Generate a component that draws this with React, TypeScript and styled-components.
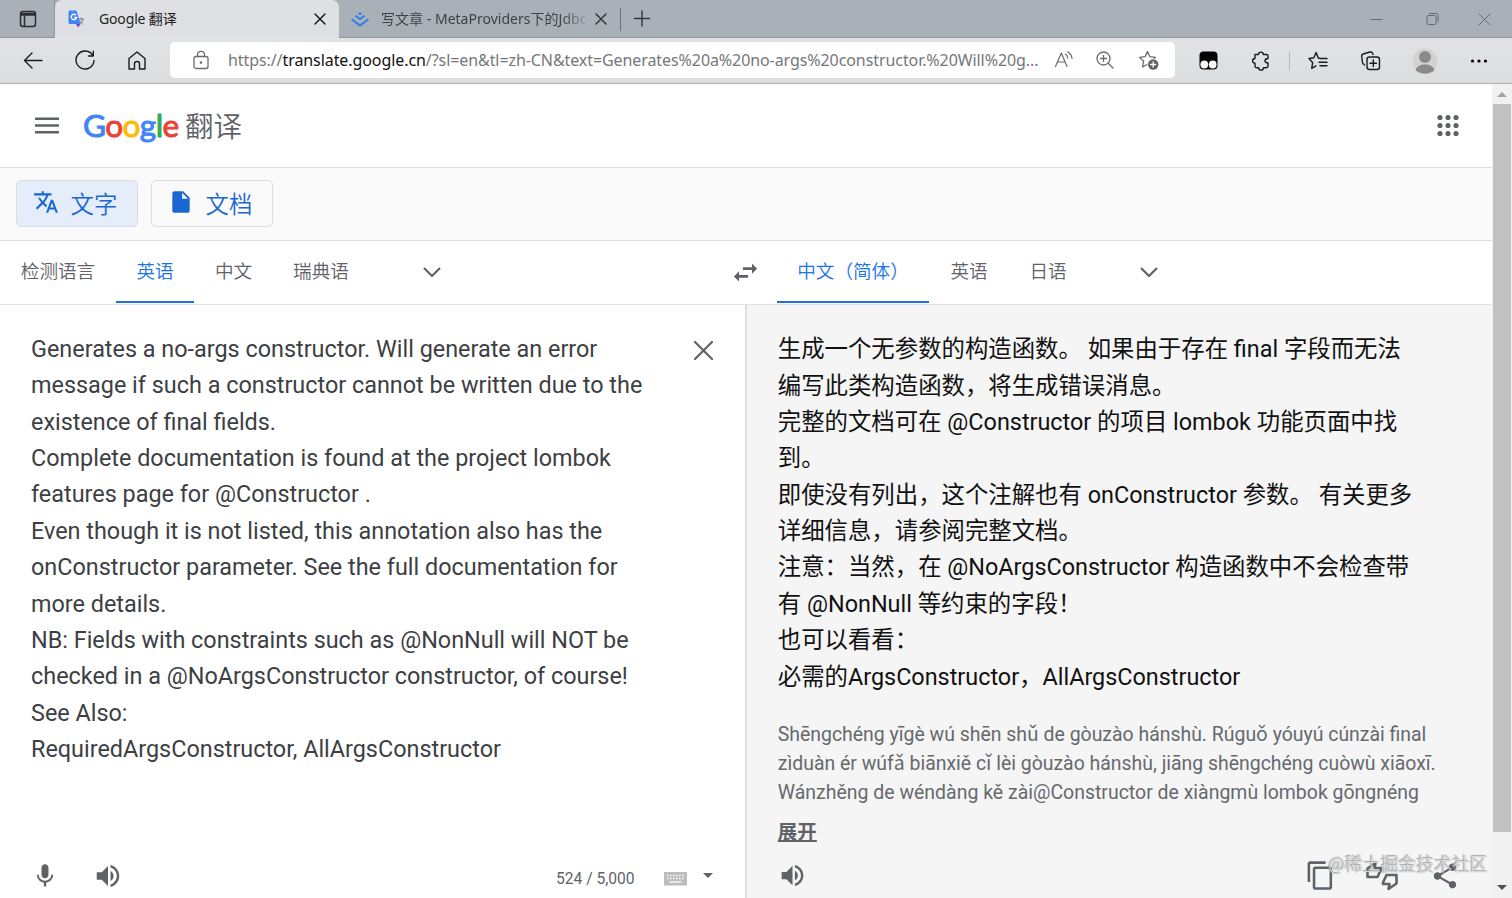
import React from "react";
import styled, { createGlobalStyle } from "styled-components";

const GlobalStyle = createGlobalStyle`
  * { box-sizing: border-box; }
  body { margin: 0; background: #fff; overflow: hidden; }
`;

const uiFont = `"Noto Sans", "Noto Sans CJK SC", sans-serif`;
const pageFont = `Roboto, "Noto Sans CJK SC", sans-serif`;

const Window = styled.div`
  width: 1512px;
  height: 898px;
  display: flex;
  flex-direction: column;
  overflow: hidden;
  font-family: ${pageFont};
  color: #5f6368;
`;

const TabStrip = styled.div`
  height: 38px;
  flex: none;
  display: flex;
  background: #aab0b8;
  box-shadow: inset 0 -1px 0 #92979e;
`;

const TabActions = styled.div`
  width: 55px;
  display: flex;
  align-items: center;
  justify-content: center;
  padding-left: 2px;
  border-right: 1px solid #92979e;
  border-bottom-right-radius: 5px;
`;

const Tab = styled.div<{ $active?: boolean; $width: number }>`
  width: ${(p) => p.$width}px;
  display: flex;
  align-items: center;
  padding: 0 13px 0 ${(p) => (p.$active ? 13 : 12)}px;
  background: ${(p) => (p.$active ? "#dfe0e4" : "transparent")};
  border-radius: ${(p) => (p.$active ? "7px 7px 0 0" : "0")};
  color: ${(p) => (p.$active ? "#1d1f22" : "#3e4247")};
`;

const TabTitle = styled.span<{ $width: number; $fade?: boolean }>`
  width: ${(p) => p.$width}px;
  margin-left: ${(p) => (p.$fade ? 12 : 13)}px;
  font: 400 14px/20px ${uiFont};
  letter-spacing: ${(p) => (p.$fade ? 0.02 : -0.15)}px;
  white-space: nowrap;
  overflow: hidden;
  ${(p) => p.$fade && "mask-image: linear-gradient(90deg, #000 88%, transparent 103%);"}
`;

const NewTab = styled.div`
  width: 44px;
  display: flex;
  align-items: center;
  gap: 12px;
`;

const TabDivider = styled.i`
  width: 1px;
  height: 23px;
  background: #6f747a;
`;

const WindowControls = styled.div`
  margin-left: auto;
  display: flex;
  align-items: center;
  gap: 38px;
  padding-right: 21px;
`;

const Toolbar = styled.div`
  height: 46px;
  flex: none;
  display: flex;
  align-items: center;
  background: linear-gradient(#e2e3e7, #dcdddf);
  border-bottom: 1px solid #b0b1b3;
`;

const ToolCell = styled.div<{ $width: number }>`
  width: ${(p) => p.$width}px;
  display: flex;
  justify-content: center;
  align-items: center;
`;

const NavButtons = styled.div`
  display: flex;
  width: 170px;
  padding-left: 7px;
`;

const AddressBar = styled.div`
  width: 1005px;
  height: 36px;
  margin-top: -1px;
  display: flex;
  align-items: center;
  background: #fff;
  border-radius: 5px;
`;

const Url = styled.span`
  width: 815px;
  margin-left: -3px;
  font: 16px/24px ${uiFont};
  letter-spacing: -0.08px;
  color: #76777a;
  white-space: nowrap;
  b { font-weight: 400; color: #111; }
`;

const Viewport = styled.div`
  flex: 1;
  display: flex;
  min-height: 0;
`;

const Page = styled.main`
  width: 1492px;
  display: flex;
  flex-direction: column;
`;

const Header = styled.header`
  height: 84px;
  display: flex;
  align-items: center;
  padding: 0 32px 0 35px;
  border-bottom: 1px solid #dcdde0;
`;

const Logo = styled.div`
  display: flex;
  align-items: baseline;
  margin: -2px 0 0 24px;
  line-height: 40px;
  white-space: nowrap;
`;

const Wordmark = styled.span`
  width: 96px;
  font: 400 31.5px/40px Lato, sans-serif;
  letter-spacing: -0.55px;
  -webkit-text-stroke: 1px currentColor;
`;

const Letter = styled.span<{ $color: string }>`
  color: ${(p) => p.$color};
`;

const Product = styled.span`
  margin-left: 6px;
  font: 350 28.5px/40px "Noto Sans CJK SC", sans-serif;
  color: #5f6368;
`;

const Push = styled.div<{ $inset?: number }>`
  margin-left: auto;
  padding-right: ${(p) => p.$inset ?? 0}px;
  display: flex;
`;

const ModeBar = styled.nav`
  height: 73px;
  display: flex;
  gap: 13px;
  padding: 12px 15.500px;
  background: #fafafa;
  border-bottom: 1px solid #dcdde0;
`;

const ModeButton = styled.button<{ $active?: boolean }>`
  width: 122px;
  height: 47px;
  display: flex;
  align-items: center;
  padding: 0 0 0 16px;
  gap: 12px;
  border: 1px solid #dadce0;
  border-radius: 5px;
  background: ${(p) => (p.$active ? "#e5ecfa" : "#fafafa")};
  color: #1967d2;
  font: 350 23.4px/40px ${pageFont};
  svg { margin-bottom: 3px; }
  span { padding-top: 2px; }
`;

const LangBar = styled.div`
  height: 64px;
  display: flex;
  border-bottom: 1px solid #dfe1e4;
`;

const LangTab = styled.div<{ $active?: boolean; $width: number }>`
  width: ${(p) => p.$width}px;
  display: flex;
  justify-content: center;
  padding-top: 17px;
  height: 62px;
  font-size: 18.6px;
  line-height: 28px;
  white-space: nowrap;
  font-weight: 350;
  color: ${(p) => (p.$active ? "#1a73e8" : "#5f6368")};
  border-bottom: 2px solid ${(p) => (p.$active ? "#1f6fd8" : "transparent")};
`;

const LangIcon = styled.div<{ $width: number }>`
  width: ${(p) => p.$width}px;
  display: flex;
  align-items: center;
  justify-content: center;
  padding-bottom: 1px;
`;

const Panels = styled.div`
  flex: 1;
  display: flex;
  min-height: 0;
`;

const SourcePanel = styled.section`
  width: 747px;
  border-right: 2px solid #dfe0e2;
  display: flex;
  flex-direction: column;
`;

const SourceBody = styled.div`
  display: flex;
  justify-content: space-between;
  padding: 26px 32px 0 31px;
`;

const Text = styled.div<{ $color: string }>`
  font-size: 23.4px;
  line-height: 36.36px;
  color: ${(p) => p.$color};
`;

const Line = styled.div<{ $track?: number }>`
  white-space: pre;
  letter-spacing: ${(p) => p.$track ?? 0}px;
`;

const ClearButton = styled.div`
  padding-top: 10px;
`;

const ActionRow = styled.div`
  margin-top: auto;
  height: 45px;
  display: flex;
  align-items: center;
`;

const Counter = styled.span`
  margin-left: 430px;
  width: 108px;
  padding-top: 7px;
  font-size: 15.6px;
  line-height: 20px;
`;

const Keyboard = styled.svg`
  margin-top: 6px;
`;

const TargetPanel = styled.section`
  position: relative;
  flex: 1;
  display: flex;
  flex-direction: column;
  padding: 26.300px 0 0 30.800px;
  background: #f5f5f5;
`;

const Pinyin = styled.div`
  margin-top: 26.500px;
  font-size: 19.43px;
  line-height: 28.7px;
  color: #65696d;
`;

const Expand = styled.a`
  margin-top: 11px;
  font: 700 19.5px/28px ${pageFont};
  color: #5f6368;
  text-decoration: underline 2px;
  text-underline-offset: 1px;
`;

const Watermark = styled.div`
  position: absolute;
  right: 4px;
  bottom: 21px;
  font: 300 17.9px/28px "Noto Sans CJK SC", sans-serif;
  color: #e2e2e2;
  text-shadow: 0 0 1px #777, -1px -1px 1px #999;
  white-space: nowrap;
`;

const Scrollbar = styled.aside`
  width: 20px;
  display: flex;
  flex-direction: column;
  align-items: center;
  background: #f1f1f1;
  padding: 8px 0 8px;
`;

const Thumb = styled.div`
  width: 18px;
  height: 728px;
  margin: 7px 0 auto;
  background: #c1c1c1;
`;

type IconProps = { d: string; size?: number; color?: string };
const Icon = ({ d, size = 28, color = "#5f6368" }: IconProps) => (
  <svg width={size} height={size} viewBox="0 0 24 24" fill={color}><path d={d} /></svg>
);

type StrokeProps = { w?: number; h?: number; sw?: number; color?: string; children: React.ReactNode };
const Stroke = ({ w = 24, h = 24, sw = 1.4, color = "#1b1b1d", children }: StrokeProps) => (
  <svg width={w} height={h} viewBox={`0 0 ${w} ${h}`} fill="none" stroke={color} strokeWidth={sw} strokeLinecap="round" strokeLinejoin="round">{children}</svg>
);

const Close = ({ size = 10, color = "#1b1b1d", sw = 1.5 }) => (
  <Stroke w={size + 2} h={size + 2} sw={sw} color={color}>
    <path d={`M1 1L${size + 1} ${size + 1}M${size + 1} 1L1 ${size + 1}`} />
  </Stroke>
);

const paths = {
  translate: "M12.87 15.07l-2.54-2.51.03-.03c1.74-1.94 2.98-4.17 3.71-6.53H17V4h-7V2H8v2H1v1.99h11.17C11.5 7.92 10.44 9.75 9 11.35 8.07 10.32 7.3 9.19 6.69 8h-2c.73 1.63 1.73 3.17 2.98 4.56l-5.09 5.02L4 19l5-5 3.11 3.11.76-2.04zM18.5 10h-2L12 22h2l1.12-3h4.75L21 22h2l-4.5-12zm-2.62 7l1.62-4.33L19.12 17h-3.24z",
  file: "M6 2c-1.1 0-1.99.9-1.99 2L4 20c0 1.1.89 2 1.99 2H18c1.1 0 2-.9 2-2V8l-6-6H6zm7 7V3.5L18.5 9H13z",
  mic: "M12 14c1.66 0 2.99-1.34 2.99-3L15 5c0-1.66-1.34-3-3-3S9 3.34 9 5v6c0 1.66 1.34 3 3 3zm5.3-3c0 3-2.54 5.1-5.3 5.1S6.700 14 6.700 11H5c0 3.410 2.720 6.230 6 6.720V21h2v-3.280c3.280-.480 6-3.300 6-6.720h-1.700z",
  volume: "M3 9v6h4l5 5V4L7 9H3zm13.500 3c0-1.770-1.020-3.290-2.500-4.030v8.050c1.480-.730 2.500-2.250 2.500-4.020zM14 3.230v2.060c2.890.860 5 3.540 5 6.710s-2.110 5.850-5 6.710v2.060c4.010-.910 7-4.490 7-8.770s-2.990-7.860-7-8.770z",
  swap: "M6.990 11L3 15l3.990 4v-3H14v-2H6.990v-3zM21 9l-3.990-4v3H10v2h7.010v3L21 9z",
  copy: "M16 1H4c-1.100 0-2 .9-2 2v14h2V3h12V1zm3 4H8c-1.100 0-2 .9-2 2v14c0 1.100.9 2 2 2h11c1.100 0 2-.9 2-2V7c0-1.100-.9-2-2-2zm0 16H8V7h11v14z",
  share: "M18 16.080c-.760 0-1.440.3-1.960.770L8.910 12.700c.050-.230.090-.460.090-.7s-.040-.470-.090-.7l7.050-4.110c.540.5 1.250.810 2.040.810 1.660 0 3-1.340 3-3s-1.340-3-3-3-3 1.340-3 3c0 .240.040.470.090.7L8.040 9.810C7.500 9.310 6.790 9 6 9c-1.660 0-3 1.340-3 3s1.340 3 3 3c.790 0 1.500-.310 2.040-.810l7.120 4.160c-.050.210-.080.430-.080.650 0 1.610 1.310 2.920 2.920 2.920s2.920-1.310 2.920-2.920-1.310-2.920-2.920-2.920z",
};

const Chevron = () => (
  <svg width="20" height="12" viewBox="0 0 20 12" fill="none" stroke="#5f6368" strokeWidth="2.200"><path d="M2 2l8 8 8-8" /></svg>
);

const TranslateFavicon = () => (
  <svg width="18" height="19" viewBox="0 0 18 19">
    <path d="M10.500 9h5.500M13.200 7.500V9M15 9c-.6 2.600-2 4.200-4 5.200M11.800 10.500c.8 1.900 1.900 3 3.500 3.900" stroke="#777d84" fill="none" />
    <path d="M2 .5h6.500l4 13.500H2q-1.500 0-1.500-1.500V2Q.5.5 2 .5z" fill="#4285f4" />
    <path d="M8 14h4.400l-2.300 3.500z" fill="#7446b5" />
    <path d="M8 5.200A2.700 2.700 0 1 0 8.600 7.500H6.300" stroke="#fff" strokeWidth="1.300" fill="none" />
  </svg>
);

const JuejinFavicon = () => (
  <svg width="18" height="15" viewBox="0 0 18 15" fill="none" stroke="#2d7df0" strokeWidth="1.900">
    <path d="M9 0l2 1.600-2 1.600-2-1.600z" fill="#2d7df0" stroke="none" />
    <path d="M4.600 3.800L9 7.100l4.400-3.300M.6 7.200L9 13.500l8.400-6.300" />
  </svg>
);

const starPath = "M10 2l2.400 5.200 5.600.7-4.100 3.900 1.100 5.700L10 14.700l-5 2.800 1.100-5.700L2 7.900l5.600-.7z";

const source: [string, number?][] = [
  ["Generates a no-args constructor. Will generate an error"],
  ["message if such a constructor cannot be written due to the"],
  ["existence of final fields."],
  ["Complete documentation is found at the project lombok"],
  ["features page for @Constructor ."],
  ["Even though it is not listed, this annotation also has the"],
  ["onConstructor parameter. See the full documentation for"],
  ["more details."],
  ["NB: Fields with constraints such as @NonNull will NOT be"],
  ["checked in a @NoArgsConstructor constructor, of course!"],
  ["See Also:"],
  ["RequiredArgsConstructor, AllArgsConstructor"],
];

const target: [string, number?][] = [
  ["生成一个无参数的构造函数。 如果由于存在 final 字段而无法"],
  ["编写此类构造函数，将生成错误消息。"],
  ["完整的文档可在 @Constructor 的项目 lombok 功能页面中找"],
  ["到。"],
  ["即使没有列出，这个注解也有 onConstructor 参数。 有关更多"],
  ["详细信息，请参阅完整文档。"],
  ["注意：当然，在 @NoArgsConstructor 构造函数中不会检查带"],
  ["有 @NonNull 等约束的字段！"],
  ["也可以看看："],
  ["必需的ArgsConstructor，AllArgsConstructor"],
];

const pinyin: [string, number?][] = [
  ["Shēngchéng yīgè wú shēn shǔ de gòuzào hánshù. Rúguǒ yóuyú cúnzài final"],
  ["zìduàn ér wúfǎ biānxiě cǐ lèi gòuzào hánshù, jiāng shēngchéng cuòwù xiāoxī."],
  ["Wánzhěng de wéndàng kě zài@Constructor de xiàngmù lombok gōngnéng", 0.02],
];

const Lines = ({ items }: { items: [string, number?][] }) => (
  <>{items.map(([text, track]) => <Line key={text} $track={track}>{text}</Line>)}</>
);

const brand: [string, string][] = [["G", "#4285f4"], ["o", "#ea4335"], ["o", "#fbbc05"], ["g", "#4285f4"], ["l", "#34a853"], ["e", "#ea4335"]];

export default function App() {
  return (
    <Window lang="zh-CN">
      <GlobalStyle />
      <TabStrip>
        <TabActions>
          <Stroke w={18} h={18} sw={1.5} color="#2b2e33">
            <rect x="1.500" y="1.500" width="15" height="15" rx="2.500" />
            <path d="M2 3.500h14M2 5h14M5.500 5v11" />
          </Stroke>
        </TabActions>
        <Tab $active $width={284}>
          <TranslateFavicon />
          <TabTitle $width={215}>Google 翻译</TabTitle>
          <Close />
        </Tab>
        <Tab $width={281}>
          <JuejinFavicon />
          <TabTitle $fade $width={204}>写文章 - MetaProviders下的Jdbc</TabTitle>
          <Push><Close color="#33373b" /></Push>
        </Tab>
        <NewTab>
          <TabDivider />
          <Stroke w={18} h={18} sw={1.4} color="#33373b"><path d="M9 1v15M1.500 8.500h15" /></Stroke>
        </NewTab>
        <WindowControls>
          <Stroke w={20} h={14} sw={1} color="#666b71"><path d="M3 7.500h11" /></Stroke>
          <Stroke w={14} h={14} sw={1} color="#666b71">
            <rect x="1" y="3.500" width="9" height="9" rx="1.500" />
            <path d="M3.500 1.500h6.500q2 0 2 2V10" />
          </Stroke>
          <Close size={11} color="#666b71" sw={1} />
        </WindowControls>
      </TabStrip>

      <Toolbar>
        <NavButtons>
          <ToolCell $width={52}><Stroke w={20} h={18}><path d="M19 8.500H1.500M9 1L1.500 8.500 9 16" /></Stroke></ToolCell>
          <ToolCell $width={52}><Stroke w={22} h={22}><path d="M18.700 5.300A9 9 0 1 0 20 10.500M19.300 1.200v4.800h-4.800" /></Stroke></ToolCell>
          <ToolCell $width={52}><Stroke w={20} h={20}><path d="M2 7.500l8-6.500L18 7.500V18h-5.500V12.500q0-2-2.500-2t-2.500 2V18H2z" /></Stroke></ToolCell>
        </NavButtons>
        <AddressBar>
          <ToolCell $width={61}>
            <Stroke w={16} h={20} color="#6b6c70" sw={1.3}>
              <rect x="1" y="6.500" width="14" height="12" rx="2" />
              <path d="M4.500 6.500V4.800a3.500 3.500 0 0 1 7 0v1.700" />
              <circle cx="8" cy="12.500" r=".7" fill="#6b6c70" />
            </Stroke>
          </ToolCell>
          <Url>https://<b>translate.google.cn</b>/?sl=en&amp;tl=zh-CN&amp;text=Generates%20a%20no-args%20constructor.%20Will%20g...</Url>
          <ToolCell $width={41}>
            <Stroke w={20} h={18} color="#6b6c70" sw={1.2}>
              <path d="M1.500 15.500L7.300 2l5.700 13.500M3.500 11h7.600M11.500 3q2 1.500 2.200 4M13.800 .800q3.700 2.500 4.200 6.500" />
            </Stroke>
          </ToolCell>
          <ToolCell $width={42}>
            <Stroke w={18} h={18} color="#6b6c70" sw={1.3}>
              <circle cx="7.500" cy="7.500" r="6.500" /><path d="M12.200 12.200l4.800 4.800M4.500 7.500h6M7.500 4.500v6" />
            </Stroke>
          </ToolCell>
          <ToolCell $width={46}>
            <Stroke w={22} h={22} color="#6b6c70" sw={1.3}>
              <g transform="translate(-.5 .5)">
                <path d={starPath} />
                <circle cx="15.700" cy="15" r="6" fill="#fff" stroke="none" />
                <circle cx="15.700" cy="15" r="5.200" fill="#606165" stroke="none" />
                <path d="M15.700 12.500v5M13.200 15h5" stroke="#fff" />
              </g>
            </Stroke>
          </ToolCell>
        </AddressBar>
        <ToolCell $width={67}>
          <svg width="20" height="20" viewBox="0 0 20 20">
            <rect x="0.500" y="0.500" width="18" height="18" rx="4" fill="#000" />
            <circle cx="5.300" cy="13.500" r="3.900" fill="#f6f6f6" /><circle cx="13.700" cy="13.500" r="3.900" fill="#f6f6f6" />
          </svg>
        </ToolCell>
        <ToolCell $width={38}>
          <Stroke w={20} h={20}>
            <path d="M4 3.500H7.500a2.400 2.400 0 0 1 4.800 0h3q1.700 0 1.700 1.700V7.500q-3 .2-3 2.300t3 2.200v3q0 1.700-1.700 1.700H12.500a2.400 2.400 0 0 1-4.800 0H5.700q-1.700 0-1.700-1.700v-2.700a2.400 2.400 0 0 1 0-4.800z" />
          </Stroke>
        </ToolCell>
        <ToolCell $width={19}><Stroke w={2} h={20} sw={1} color="#b5b6b9"><path d="M.5 1v18" /></Stroke></ToolCell>
        <ToolCell $width={40}>
          <Stroke w={22} h={20}>
            <path d="M12.500 7.500l-2.200-.5L8.100 1.500 5.900 6.700 1 7.500l3.700 4.200-1 5.700 4.300-2.500M12.500 7.500H19M11 11.200H19M12 14.800H19" />
          </Stroke>
        </ToolCell>
        <ToolCell $width={64}>
          <Stroke w={20} h={20}>
            <rect x="6" y="6" width="12.500" height="12.500" rx="2.500" />
            <path d="M12.300 9v6.500M9 12.300H15.500M3.500 14q-1.500-1-2-2.500L.7 5.500Q.5 3.500 2.200 3L9 1q2-.4 2.700 1.500l.4 1" />
          </Stroke>
        </ToolCell>
        <ToolCell $width={44}>
          <svg width="26" height="26" viewBox="0 0 26 26">
            <circle cx="13" cy="13" r="12.500" fill="#d3d2d2" />
            <circle cx="13" cy="9" r="6" fill="#8b8a89" />
            <path d="M3.500 22q2-5.500 9.500-5.500t9.500 5.500q-4 3.800-9.500 3.800T3.500 22z" fill="#8b8a89" />
          </svg>
        </ToolCell>
        <ToolCell $width={63}>
          <svg width="18" height="4" viewBox="0 0 18 4"><circle cx="2.500" cy="2" r="1.600" /><circle cx="9" cy="2" r="1.600" /><circle cx="15.500" cy="2" r="1.600" /></svg>
        </ToolCell>
      </Toolbar>

      <Viewport>
        <Page>
          <Header>
            <svg width="24" height="18" viewBox="0 0 24 18" fill="#5f6368"><path d="M0 .6h24v2.500H0zM0 7.300h24v2.500H0zM0 13.900h24v2.500H0z" /></svg>
            <Logo>
              <Wordmark>{brand.map(([ch, color], i) => <Letter key={i} $color={color}>{ch}</Letter>)}</Wordmark>
              <Product>翻译</Product>
            </Logo>
            <Push>
              <svg width="24" height="24" viewBox="0 0 24 24" fill="#5f6368">
                {[3.5, 11.5, 19.5].map((y) => [4, 12, 20].map((x) => <circle key={`${x}-${y}`} cx={x} cy={y} r="2.600" />))}
              </svg>
            </Push>
          </Header>

          <ModeBar>
            <ModeButton $active><Icon d={paths.translate} size={26} color="#1967d2" /><span>文字</span></ModeButton>
            <ModeButton><Icon d={paths.file} size={26} color="#1967d2" /><span>文档</span></ModeButton>
          </ModeBar>

          <LangBar>
            <LangTab $width={116}>检测语言</LangTab>
            <LangTab $width={78} $active>英语</LangTab>
            <LangTab $width={79}>中文</LangTab>
            <LangTab $width={96}>瑞典语</LangTab>
            <LangIcon $width={126}><Chevron /></LangIcon>
            <LangIcon $width={219} />
            <LangIcon $width={63}><Icon d={paths.swap} size={31} /></LangIcon>
            <LangTab $width={152} $active>中文（简体）</LangTab>
            <LangTab $width={80}>英语</LangTab>
            <LangTab $width={78}>日语</LangTab>
            <LangIcon $width={124}><Chevron /></LangIcon>
          </LangBar>

          <Panels>
            <SourcePanel>
              <SourceBody>
                <Text $color="#3c4043"><Lines items={source} /></Text>
                <ClearButton><Close size={17} color="#5f6368" sw={2.2} /></ClearButton>
              </SourceBody>
              <ActionRow>
                <ToolCell $width={90}><Icon d={paths.mic} size={28} /></ToolCell>
                <ToolCell $width={36}><Icon d={paths.volume} size={30} /></ToolCell>
                <Counter>524 / 5,000</Counter>
                <Keyboard width="23" height="14" viewBox="0 0 23 14">
                  <rect y="0" width="23" height="13.500" fill="#bdbdbd" />
                  <path d="M3 3.500h17M3 6.500h17" stroke="#fff" strokeWidth="1.500" strokeDasharray="1.500 1.500" />
                  <path d="M5.500 10h12" stroke="#fff" strokeWidth="1.300" />
                </Keyboard>
                <ToolCell $width={42}><svg width="10" height="5" viewBox="0 0 10 5" fill="#5f6368"><path d="M0 0h10L5 5z" /></svg></ToolCell>
              </ActionRow>
            </SourcePanel>

            <TargetPanel>
              <Text $color="#111"><Lines items={target} /></Text>
              <Pinyin><Lines items={pinyin} /></Pinyin>
              <Expand>展开</Expand>
              <ActionRow>
                <Icon d={paths.volume} size={29} />
                <Push $inset={15}>
                  <ToolCell $width={62}><Icon d={paths.copy} size={31} /></ToolCell>
                  <ToolCell $width={62}>
                    <svg width="32" height="30" viewBox="0 0 32 30" fill="none" stroke="#5f6368" strokeWidth="2.600" strokeLinejoin="round">
                      <path d="M1.500 7.500v8.500h10l3.500-7.500V7H8.500l1-5z" />
                      <path d="M30.500 22.500V14h-10L17 21.500V23h6.500l-1 5z" />
                    </svg>
                  </ToolCell>
                  <ToolCell $width={64}><Icon d={paths.share} size={30} /></ToolCell>
                </Push>
              </ActionRow>
              <Watermark>@稀土掘金技术社区</Watermark>
            </TargetPanel>
          </Panels>
        </Page>
        <Scrollbar>
          <svg width="10" height="5" viewBox="0 0 10 5" fill="#a3a3a3"><path d="M0 5h10L5 0z" /></svg>
          <Thumb />
          <svg width="10" height="5" viewBox="0 0 10 5" fill="#505050"><path d="M0 0h10L5 5z" /></svg>
        </Scrollbar>
      </Viewport>
    </Window>
  );
}
